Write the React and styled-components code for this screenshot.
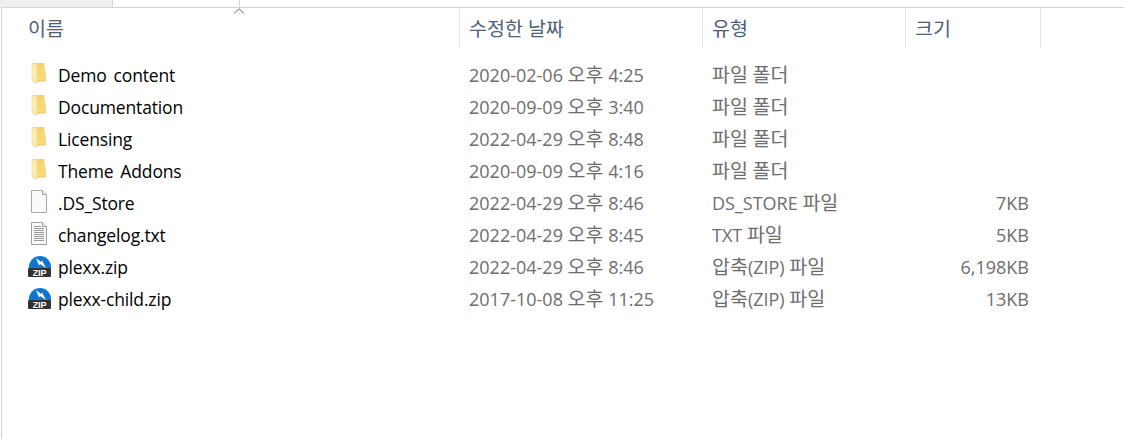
import styled, { createGlobalStyle } from "styled-components";

const Global = createGlobalStyle`
  html, body { margin: 0; padding: 0; background: #fff; }
  body { font-family: "Open Sans", "Noto Sans CJK KR", sans-serif; overflow: hidden; }
`;

const COLUMNS = "458px 243px 203px 135px";

const Page = styled.div`
  width: 1124px;
  height: 439px;
  display: flex;
  flex-direction: column;
  overflow: hidden;
`;

const TabStrip = styled.div`
  display: flex;
  height: 7px;
`;

const Tab = styled.div`
  width: ${(p) => p.$width}px;
  background: ${(p) => p.$bg || "#fff"};
  border-right: 1px solid #d9d9d9;
`;

const Pane = styled.div`
  position: relative;
  flex: 1;
  border-top: 1px solid #d4d4d4;
  border-left: 1px solid #d4d4d4;
  margin-left: 1px;
`;

const SortCaret = styled.svg`
  position: absolute;
  left: 231px;
  top: 0;
  width: 12px;
  height: 6px;
`;

const Header = styled.div`
  display: grid;
  grid-template-columns: ${COLUMNS};
  height: 40px;
  margin-bottom: 11px;
`;

const HeadCell = styled.div`
  display: flex;
  align-items: center;
  padding-left: ${(p) => p.$pad ?? 9}px;
  padding-bottom: 2px;
  border-right: 1px solid #e3e3e3;
  font-size: 19.5px;
  color: #4c607a;
`;

const Row = styled.div`
  display: grid;
  grid-template-columns: ${COLUMNS};
  height: 32px;
  align-items: center;
`;

const NameCell = styled.div`
  display: flex;
  align-items: center;
  padding-left: 26px;
  font-size: 17.5px;
  letter-spacing: -0.15px;
  word-spacing: 2.5px;
  color: #000;
`;

const IconBox = styled.span`
  display: inline-flex;
  width: 30px;
  height: 26px;
  align-items: center;
`;

const Glyph = styled.svg`
  display: block;
  width: 24px;
  height: 26px;
`;

const MetaCell = styled.div`
  padding-left: ${(p) => p.$pad}px;
  padding-bottom: 1px;
  font-size: 18px;
  line-height: 26px;
  color: #6d6d6d;
  white-space: nowrap;
`;

const SizeCell = styled(MetaCell)`
  padding-left: 0;
  padding-right: 12px;
  text-align: right;
`;

const Hangul = styled.span`
  font-size: 19.5px;
`;

const FolderIcon = () => (
  <Glyph viewBox="0 -1 24 26">
    <defs>
      <linearGradient id="folderBody" x1="0" y1="0" x2="0" y2="1">
        <stop offset="0" stopColor="#f3d06f" />
        <stop offset="1" stopColor="#fbdc87" />
      </linearGradient>
    </defs>
    <path d="M6 0h10.500v6l1.500 3v9H6z" fill="url(#folderBody)" />
    <path d="M4 0l5 2v19l-5-3z" fill="#fcecb2" stroke="#ecd48c" strokeWidth="0.6" />
    <path d="M9 17.500h9v1H9z" fill="#e6c062" />
  </Glyph>
);

const BlankIcon = () => (
  <Glyph viewBox="0 -1 24 26">
    <path d="M3.5 -.5h11l4 4v18h-15z" fill="#fafafa" stroke="#a8a8a8" />
    <path d="M14.5 -.5v4h4" fill="#eee" stroke="#a8a8a8" />
  </Glyph>
);

const TextIcon = () => (
  <Glyph viewBox="0 -1 24 26">
    <path d="M3.5 -.5h11l4 4v18h-15z" fill="#fafafa" stroke="#a0a0a0" />
    <path d="M14.5 -.5v4h4" fill="#eee" stroke="#a0a0a0" />
    <path
      d="M6 3.500h7M6 5.500h10M6 7.500h10M6 9.500h10M6 11.500h10M6 13.500h10M6 15.500h10M6 17.500h10"
      stroke="#9a9a9a"
      fill="none"
    />
  </Glyph>
);

const ZipIcon = () => (
  <Glyph viewBox="0 -1 24 26">
    <path d="M1 12a11 11 0 0 1 22 0v2H1z" fill="#0f74d2" />
    <path d="M8 3l5 4 1-1.500 4 7.500-6-4-1 1.500z" fill="#fff" />
    <rect x="0" y="13" width="23" height="9" rx="1" fill="#333" />
    <text x="11.500" y="21" fontSize="9" fontWeight="700" textAnchor="middle" fill="#fff" fontFamily="Liberation Sans, sans-serif">
      ZIP
    </text>
  </Glyph>
);

const mixed = (text) =>
  text.split(/([\uac00-\ud7a3]+)/).map((part, i) =>
    i % 2 ? <Hangul key={i}>{part}</Hangul> : part
  );

const FILES = [
  { name: "Demo content", date: "2020-02-06 오후 4:25", type: "파일 폴더", size: "", Icon: FolderIcon },
  { name: "Documentation", date: "2020-09-09 오후 3:40", type: "파일 폴더", size: "", Icon: FolderIcon },
  { name: "Licensing", date: "2022-04-29 오후 8:48", type: "파일 폴더", size: "", Icon: FolderIcon },
  { name: "Theme Addons", date: "2020-09-09 오후 4:16", type: "파일 폴더", size: "", Icon: FolderIcon },
  { name: ".DS_Store", date: "2022-04-29 오후 8:46", type: "DS_STORE 파일", size: "7KB", Icon: BlankIcon },
  { name: "changelog.txt", date: "2022-04-29 오후 8:45", type: "TXT 파일", size: "5KB", Icon: TextIcon },
  { name: "plexx.zip", date: "2022-04-29 오후 8:46", type: "압축(ZIP) 파일", size: "6,198KB", Icon: ZipIcon },
  { name: "plexx-child.zip", date: "2017-10-08 오후 11:25", type: "압축(ZIP) 파일", size: "13KB", Icon: ZipIcon },
];

export default function App() {
  return (
    <Page>
      <Global />
      <TabStrip>
        <Tab $width={112} $bg="#f0f0f0" />
        <Tab $width={126} />
      </TabStrip>
      <Pane>
        <SortCaret viewBox="0 0 12 6">
          <path d="M1 5.500L6 .8l5 4.700" fill="none" stroke="#666" />
        </SortCaret>
        <Header>
          <HeadCell $pad={26}>이름</HeadCell>
          <HeadCell>수정한 날짜</HeadCell>
          <HeadCell>유형</HeadCell>
          <HeadCell>크기</HeadCell>
        </Header>
        {FILES.map(({ name, date, type, size, Icon }) => (
          <Row key={name}>
            <NameCell>
              <IconBox>
                <Icon />
              </IconBox>
              {name}
            </NameCell>
            <MetaCell $pad={9}>{mixed(date)}</MetaCell>
            <MetaCell $pad={9}>{mixed(type)}</MetaCell>
            <SizeCell>{size}</SizeCell>
          </Row>
        ))}
      </Pane>
    </Page>
  );
}
